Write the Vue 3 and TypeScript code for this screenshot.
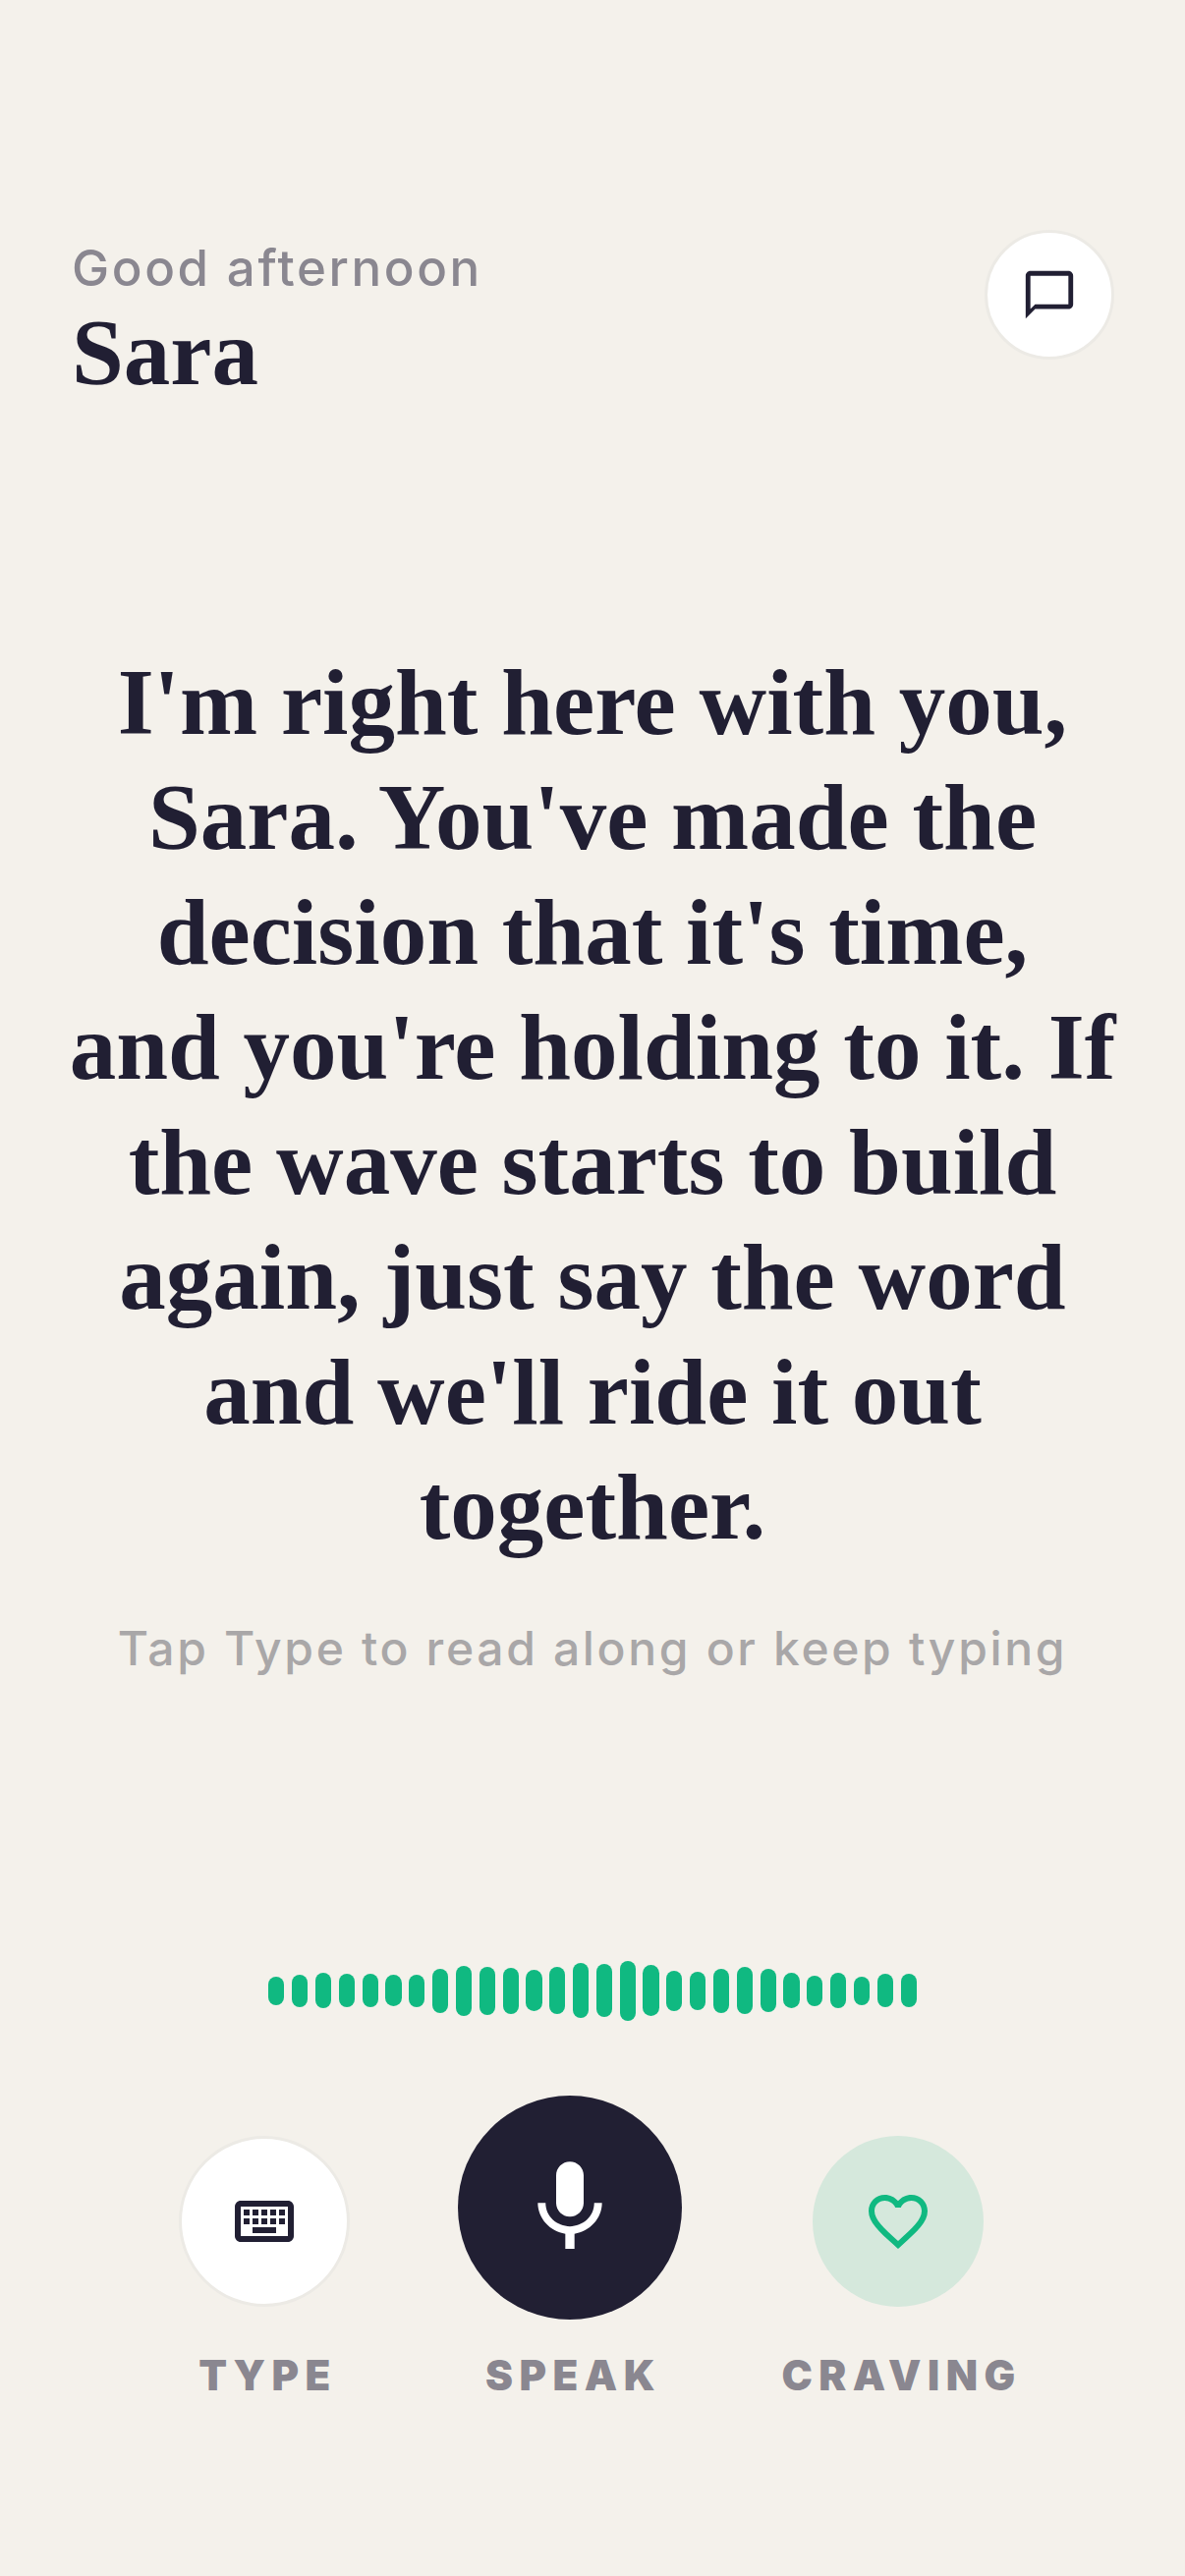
<script setup lang="ts">
const lines = [
  "I'm right here with you,",
  "Sara. You've made the",
  "decision that it's time,",
  "and you're holding to it. If",
  "the wave starts to build",
  "again, just say the word",
  "and we'll ride it out",
  "together.",
];

const bars = [
  29, 33, 36, 34, 34, 32, 33, 45, 51, 49, 47, 42, 48, 56, 54, 61, 52, 41, 39, 45, 48, 44, 36, 31,
  36, 29, 34, 34,
];
</script>

<template>
  <div class="screen">
    <header class="top">
      <div>
        <div class="greeting">Good afternoon</div>
        <div class="name">Sara</div>
      </div>
      <button class="chat" aria-label="Chat">
        <svg width="58" height="58" viewBox="0 0 24 24">
          <path d="M20 2H4c-1.1 0-2 .9-2 2v18l4-4h14c1.1 0 2-.9 2-2V4c0-1.1-.9-2-2-2zm0 14H6l-2 2V4h16v12z" />
        </svg>
      </button>
    </header>

    <main class="reply">
      <p class="message">
        <span v-for="line in lines" :key="line" class="line">{{ line }}</span>
      </p>
      <p class="hint">Tap Type to read along or keep typing</p>
    </main>

    <div class="wave">
      <span v-for="(h, i) in bars" :key="i" class="bar" :style="{ height: h + 'px' }" />
    </div>

    <nav class="actions">
      <div class="action action-type">
        <button class="round round-type" aria-label="Type">
          <svg width="72" height="72" viewBox="0 0 24 24">
            <path d="M20 7v10H4V7h16m0-2H4c-1.1 0-1.99.9-1.99 2L2 17c0 1.1.9 2 2 2h16c1.1 0 2-.9 2-2V7c0-1.1-.9-2-2-2zm-9 3h2v2h-2zm0 3h2v2h-2zM8 8h2v2H8zm0 3h2v2H8zm-3 0h2v2H5zm0-3h2v2H5zm3 6h8v2H8zm6-3h2v2h-2zm0-3h2v2h-2zm3 3h2v2h-2zm0-3h2v2h-2z" />
          </svg>
        </button>
        <span class="label">TYPE</span>
      </div>
      <div class="action action-speak">
        <button class="round round-speak" aria-label="Speak">
          <svg width="112" height="112" viewBox="0 0 24 24">
            <path d="M12 14c1.66 0 3-1.34 3-3V5c0-1.66-1.34-3-3-3S9 3.34 9 5v6c0 1.66 1.34 3 3 3zm5.3-3c0 3-2.54 5.1-5.3 5.1S6.7 14 6.7 11H5c0 3.41 2.72 6.23 6 6.72V21h2v-3.28c3.28-.48 6-3.3 6-6.72h-1.7z" />
          </svg>
        </button>
        <span class="label">SPEAK</span>
      </div>
      <div class="action action-craving">
        <button class="round round-craving" aria-label="Craving">
          <svg width="72" height="72" viewBox="0 0 24 24">
            <path d="M16.5 3c-1.74 0-3.41.81-4.5 2.09C10.91 3.81 9.24 3 7.5 3 4.42 3 2 5.42 2 8.5c0 3.78 3.4 6.86 8.55 11.54L12 21.35l1.45-1.32C18.6 15.36 22 12.28 22 8.5 22 5.42 19.58 3 16.5 3zm-4.4 15.55l-.1.1-.1-.1C7.14 14.24 4 11.39 4 8.5 4 6.5 5.5 5 7.5 5c1.54 0 3.04.99 3.57 2.36h1.87C13.46 5.99 14.96 5 16.5 5c2 0 3.5 1.5 3.5 3.5 0 2.89-3.14 5.74-7.9 10.05z" />
          </svg>
        </button>
        <span class="label">CRAVING</span>
      </div>
    </nav>
  </div>
</template>

<style scoped>
.screen {
  width: 1206px;
  height: 2622px;
  background: #f4f1eb;
  color: #211f33;
  font-family: Inter, "Liberation Sans", sans-serif;
  overflow: hidden;
}

.top {
  display: flex;
  justify-content: space-between;
  align-items: flex-start;
  padding: 234px 72px 0 73px;
}

.greeting {
  margin-top: 9px;
  font-size: 51px;
  line-height: 60px;
  font-weight: 500;
  letter-spacing: 2.6px;
  color: #8a8790;
}

.name {
  margin-top: 2px;
  font-family: "Liberation Serif", serif;
  font-weight: 700;
  font-size: 95px;
  line-height: 108px;
}

.chat {
  width: 132px;
  height: 132px;
  padding: 0;
  display: flex;
  align-items: center;
  justify-content: center;
  background: #fff;
  border: 3px solid #eceae5;
  border-radius: 50%;
}

.chat svg {
  fill: #211f33;
}

.reply {
  margin-top: 244px;
  text-align: center;
}

.message {
  margin: 0;
  font-family: "Liberation Serif", serif;
  font-weight: 700;
  font-size: 95px;
  line-height: 117px;
}

.line {
  display: block;
  white-space: nowrap;
}

.hint {
  margin: 55px 0 0;
  font-size: 48px;
  line-height: 60px;
  font-weight: 500;
  letter-spacing: 2.66px;
  color: #a9a7a8;
}

.wave {
  display: flex;
  align-items: center;
  justify-content: center;
  gap: 7.65px;
  height: 62px;
  margin-top: 287px;
}

.bar {
  width: 16.2px;
  border-radius: 9px;
  background: #10b981;
}

.actions {
  display: flex;
  padding: 76px 0 0 182px;
  gap: 102px;
}

.action {
  display: flex;
  flex-direction: column;
  align-items: center;
}

.action-type {
  width: 174px;
  margin-right: 8px;
}

.action-speak {
  width: 228px;
}

.action-craving {
  width: 236px;
}

.round {
  display: flex;
  align-items: center;
  justify-content: center;
  padding: 0;
  border: none;
  border-radius: 50%;
}

.round-type {
  width: 174px;
  height: 174px;
  margin: 41px 0 13px;
  background: #fff;
  border: 3px solid #eceae5;
}

.round-speak {
  width: 228px;
  height: 228px;
  background: #211f33;
}

.round-craving {
  width: 174px;
  height: 174px;
  margin: 41px 0 13px;
  background: #d5e8dc;
}

.round-type svg {
  fill: #211f33;
}

.round-speak svg {
  fill: #fff;
}

.round-craving svg {
  fill: #10b981;
}

.label {
  margin-top: 32px;
  margin-right: -7px;
  font-size: 42px;
  line-height: 50px;
  font-weight: 900;
  letter-spacing: 6.5px;
  color: #8a8790;
  white-space: nowrap;
}
</style>
